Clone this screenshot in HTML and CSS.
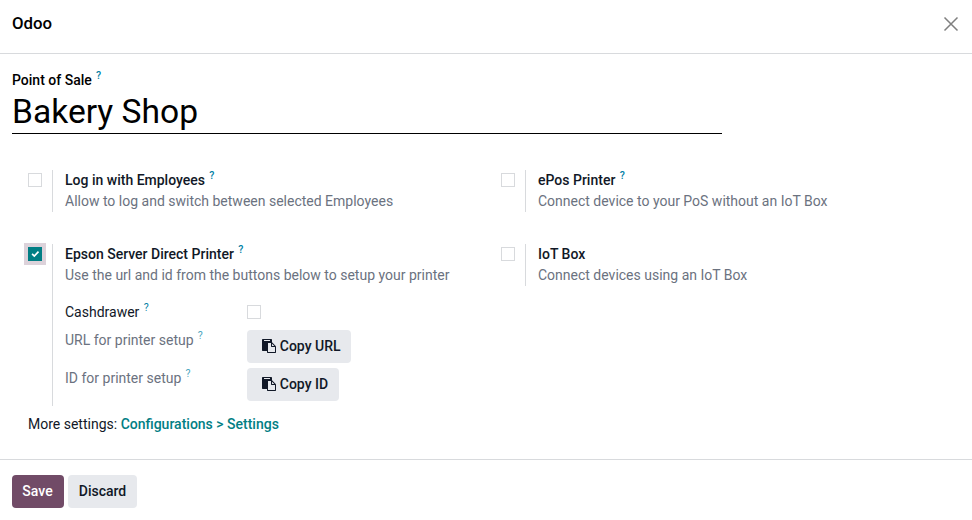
FILE: index.html
```
<!DOCTYPE html>
<html lang="en">
<head>
<meta charset="utf-8">
<title>Odoo</title>
<link rel="stylesheet" href="styles.css">
</head>
<body>
<svg class="defs" width="0" height="0" aria-hidden="true">
  <symbol id="paste" viewBox="0 0 1792 1792"><path d="M768 1664h896v-640h-416q-40 0-68-28t-28-68v-416h-384v1152zm256-1440v-64q0-13-9.500-22.500t-22.500-9.500h-704q-13 0-22.500 9.500t-9.500 22.500v64q0 13 9.500 22.500t22.500 9.500h704q13 0 22.500-9.500t9.500-22.500zm256 672h299l-299-299v299zm512 128v672q0 40-28 68t-68 28h-960q-40 0-68-28t-28-68v-160h-544q-40 0-68-28t-28-68v-1344q0-40 28-68t68-28h1088q40 0 68 28t28 68v328q21 13 36 28l408 408q28 28 48 76t20 88z"/></symbol>
</svg>
<div class="dialog">
  <header class="header">
    <h4 class="title">Odoo</h4>
    <svg class="close" viewBox="0 0 14 14"><path d="M.5.5l13 13M13.500.5l-13 13"/></svg>
  </header>
  <main class="body">
    <div class="label name-label">Point of Sale<sup class="help">?</sup></div>
    <div class="name">Bakery Shop</div>
    <div class="settings">
      <section class="setting">
        <span class="check"></span>
        <div class="pane">
          <div class="label">Log in with Employees<sup class="help">?</sup></div>
          <div class="muted">Allow to log and switch between selected Employees</div>
        </div>
      </section>
      <section class="setting">
        <span class="check"></span>
        <div class="pane">
          <div class="label">ePos Printer<sup class="help">?</sup></div>
          <div class="muted">Connect device to your PoS without an IoT Box</div>
        </div>
      </section>
      <section class="setting">
        <span class="check checked"><svg viewBox="0 0 14 14"><path d="M4.100 6.800l2.200 2.200 4.200-4.300"/></svg></span>
        <div class="pane">
          <div class="label">Epson Server Direct Printer<sup class="help">?</sup></div>
          <div class="muted">Use the url and id from the buttons below to setup your printer</div>
          <div class="fields">
            <div class="field cash">
              <div class="field-label strong">Cashdrawer<sup class="help">?</sup></div>
              <span class="check"></span>
            </div>
            <div class="field">
              <div class="field-label">URL for printer setup<sup class="help">?</sup></div>
              <button class="btn copy"><svg class="icon"><use href="#paste"/></svg>Copy URL</button>
            </div>
            <div class="field">
              <div class="field-label">ID for printer setup<sup class="help">?</sup></div>
              <button class="btn copy"><svg class="icon"><use href="#paste"/></svg>Copy ID</button>
            </div>
          </div>
        </div>
      </section>
      <section class="setting">
        <span class="check"></span>
        <div class="pane">
          <div class="label">IoT Box</div>
          <div class="muted">Connect devices using an IoT Box</div>
        </div>
      </section>
    </div>
    <div class="more">More settings: <a class="link">Configurations &gt; Settings</a></div>
  </main>
  <footer class="footer">
    <button class="btn primary">Save</button>
    <button class="btn">Discard</button>
  </footer>
</div>
</body>
</html>
```
FILE: styles.css
```
* { box-sizing: border-box; }
body {
  margin: 0;
  background: #fff;
  color: #111827;
  font: 14px/21px Roboto, sans-serif;
}
.defs { display: block; }
.dialog { display: flex; flex-direction: column; height: 520px; }
.header {
  display: flex;
  align-items: center;
  justify-content: space-between;
  height: 54px;
  padding: 0 14px 6px 12px;
  border-bottom: 1px solid #d8dadd;
}
.title { margin: 0 0 2px; font-size: 16.8px; line-height: 24px; font-weight: 500; color: #000; }
.close { width: 14px; height: 14px; overflow: visible; fill: none; stroke: #7f7f7f; stroke-width: 1.5; }
.body { flex: 1; padding: 16px 12px 0; }
.label { font-weight: 500; }
.name-label { color: #000; }
.help {
  margin-left: 4.3px;
  font-size: 10.5px;
  line-height: 0;
  font-weight: 500;
  vertical-align: baseline;
  position: relative;
  top: -6px;
  color: #0180a5;
}
.name {
  width: 710px;
  height: 43px;
  border-bottom: 1px solid #000;
  color: #000;
  font-size: 33.6px;
  line-height: 41px;
}
.settings {
  display: grid;
  grid-template-columns: 473px 1fr;
  row-gap: 32px;
  margin: 36px 0 0 16px;
}
.setting { display: flex; align-items: flex-start; }
.check {
  flex: none;
  width: 14px;
  height: 14px;
  margin-top: 3px;
  border: 1px solid #d8dadd;
  background: #fff;
}
.checked { border: 0; background: #017e84; box-shadow: 0 0 0 4px #dcd2da; }
.checked svg { display: block; fill: none; stroke: #fff; stroke-width: 1.7; }
.pane { margin-left: 10px; padding-left: 12px; border-left: 1px solid #d8dadd; }
.muted { color: #6b7280; }
.fields { display: grid; gap: 5px; padding: 16px 0 5px; }
.field { display: grid; grid-template-columns: 182px auto; justify-content: start; align-items: start; }
.cash { height: 23px; }
.field-label { color: #6b7280; }
.field-label .help { font-weight: 400; color: #4da6c0; }
.field-label.strong { color: #111827; }
.strong .help { color: #0180a5; }
.btn {
  height: 33px;
  padding: 0 10.6px;
  border: 0;
  border-radius: 4px;
  background: #e7e9ed;
  color: #111827;
  font: 500 14px/21px Roboto, sans-serif;
}
.copy { display: flex; align-items: center; padding: 0 10.5px 0 14.7px; }
.icon { width: 14px; height: 14px; margin: 0 4.1px 1px 0; fill: #111827; }
.more { margin: 8px 0 0 16px; }
.link { color: #017e84; font-weight: 500; }
.footer { display: flex; gap: 4px; height: 61px; padding: 15px 12px; border-top: 1px solid #d8dadd; }
.footer .btn { flex: none; width: 69px; padding: 0; }
.footer .primary { width: 52px; padding-right: 1px; background: #714b67; color: #fff; }
```
